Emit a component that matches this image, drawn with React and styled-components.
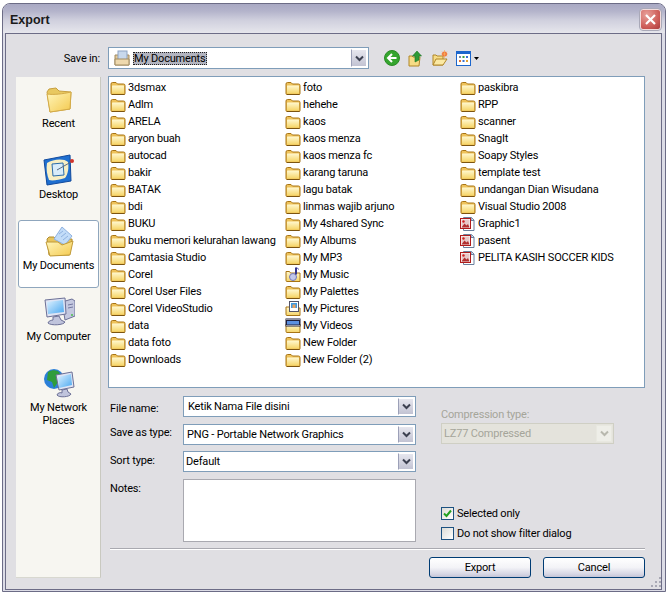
import React from 'react'
import styled, { createGlobalStyle } from 'styled-components'

const GlobalStyle = createGlobalStyle`
  html, body {
    margin: 0;
    padding: 0;
    background: #fff;
    font-family: Roboto, "Liberation Sans", Arial, sans-serif;
    font-size: 11px;
    letter-spacing: -0.18px;
    color: #000;
  }
`

const Page = styled.div`
  width: 669px;
  height: 595px;
  padding: 3px 0 0 2px;
  box-sizing: border-box;
  overflow: hidden;
`

const Window = styled.div`
  position: relative;
  width: 664px;
  height: 589px;
  box-sizing: border-box;
  display: flex;
  flex-direction: column;
  border: 1px solid #6c6c86;
  border-radius: 8px 8px 0 0;
  background: #dcdce6;
  overflow: hidden;
`

const TitleBar = styled.div`
  height: 29px;
  flex: none;
  display: flex;
  align-items: center;
  justify-content: space-between;
  padding: 2px 4px 0 7px;
  box-sizing: border-box;
  background: linear-gradient(#a9a9c3 0%, #b4b4cb 25%, #cfcfdd 55%, #e6e6ec 100%);
`

const Title = styled.div`
  font-family: "Liberation Sans", Arial, sans-serif;
  font-size: 12.5px;
  font-weight: bold;
  letter-spacing: 0;
  padding-top: 1px;
  color: #1a1a1a;
`

const CloseButton = styled.div`
  width: 21px;
  height: 21px;
  box-sizing: border-box;
  display: flex;
  align-items: center;
  justify-content: center;
  border: 1px solid #f3dcdc;
  outline: 1px solid #a9a9b8;
  border-radius: 3px;
  background: radial-gradient(circle at 30% 25%, #e8a09a, #cc5a56 65%, #a83a3c);
`

const Body = styled.div`
  flex: 1;
  display: flex;
  flex-direction: column;
  margin: 0 3px 1px 2px;
  padding: 13px 16px 0 10px;
  background: #e0dfe3;
  border: 1px solid #6c6c86;
  min-height: 0;
`

const SaveRow = styled.div`
  display: flex;
  align-items: center;
  height: 22px;
  margin-bottom: 7px;
`

const SaveLabel = styled.div`
  width: 92px;
  padding-right: 8px;
  box-sizing: border-box;
  text-align: right;
`

const Combo = styled.div`
  width: ${(p) => p.$width}px;
  height: ${(p) => p.$height || 21}px;
  box-sizing: border-box;
  display: flex;
  align-items: center;
  justify-content: space-between;
  background: ${(p) => (p.$disabled ? '#e4e3dc' : '#fff')};
  border: 1px solid ${(p) => (p.$disabled ? '#cfcfc4' : '#7f9db9')};
  color: ${(p) => (p.$disabled ? '#a5a59a' : '#000')};
  padding-left: ${(p) => p.$indent || 2}px;
`

const ComboArrow = styled.div`
  width: 16px;
  align-self: stretch;
  flex: none;
  margin: 1px;
  box-sizing: border-box;
  display: flex;
  align-items: center;
  justify-content: center;
  border: 1px solid ${(p) => (p.$disabled ? '#e8e8e0' : '#fff')};
  border-left-color: ${(p) => (p.$disabled ? '#e8e8e0' : '#9ca0b8')};
  background: ${(p) => (p.$disabled ? '#eeeee8' : 'linear-gradient(#e6e6ee, #c2c3d3)')};
`

const ComboValue = styled.span`
  display: flex;
  align-items: center;
`

const SelectedText = styled.span`
  margin-left: 3px;
  padding: 0 1px;
  line-height: 13px;
  background: #b2b4bf;
  outline: 1px dotted #222;
  outline-offset: -1px;
`

const Toolbar = styled.div`
  display: flex;
  align-items: center;
  gap: 8px;
  margin-left: 15px;
`

const Main = styled.div`
  flex: 1;
  display: flex;
  gap: 7px;
`

const Sidebar = styled.div`
  width: 85px;
  height: 501px;
  margin-top: 1px;
  flex: none;
  box-sizing: border-box;
  display: flex;
  flex-direction: column;
  gap: 3px;
  padding: 1px 1px 0 2px;
  background: #f7f6f1;
  border-right: 1px solid #c9c9c0;
  border-bottom: 1px solid #d8d8d0;
`

const Place = styled.div`
  height: 68px;
  box-sizing: border-box;
  display: flex;
  flex-direction: column;
  align-items: center;
  text-align: center;
  line-height: 13px;
  padding-top: 4px;
  gap: 2px;
  border: 1px solid ${(p) => (p.$active ? '#8fa6bd' : 'transparent')};
  border-radius: 3px;
  background: ${(p) => (p.$active ? '#fff' : 'transparent')};
  svg {
    flex: none;
  }
`

const Content = styled.div`
  flex: 1;
  display: flex;
  flex-direction: column;
  min-width: 0;
`

const FileList = styled.div`
  height: 312px;
  box-sizing: border-box;
  flex: none;
  display: grid;
  grid-template-columns: 175px 175px 1fr;
  align-content: start;
  padding: 2px 0 0 1px;
  background: #fff;
  border: 1px solid #7f9db9;
`

const Column = styled.div`
  display: flex;
  flex-direction: column;
`

const FileRow = styled.div`
  height: 17px;
  display: flex;
  align-items: center;
  gap: 2px;
  white-space: nowrap;
`

const FormArea = styled.div`
  display: flex;
  margin-top: 8px;
  height: 146px;
`

const FormGrid = styled.div`
  display: grid;
  grid-template-columns: 75px 233px;
  grid-auto-rows: min-content;
  row-gap: 6.5px;
`

const FieldLabel = styled.div`
  padding: ${(p) => p.$top || 0}px 0 0 2px;
  line-height: 13px;
`

const Notes = styled.div`
  width: 233px;
  height: 63px;
  box-sizing: border-box;
  background: #fff;
  border: 1px solid #a9a9b0;
`

const Options = styled.div`
  flex: 1;
  display: flex;
  flex-direction: column;
  padding: 12px 0 0 25px;
`

const DisabledLabel = styled.div`
  color: #a5a59a;
  line-height: 13px;
  margin-bottom: 2px;
`

const Checks = styled.div`
  margin-top: auto;
  display: flex;
  flex-direction: column;
  gap: 7px;
  padding-bottom: 2px;
`

const CheckRow = styled.div`
  display: flex;
  align-items: center;
  gap: 3px;
  line-height: 13px;
`

const CheckBox = styled.div`
  width: 13px;
  height: 13px;
  box-sizing: border-box;
  display: flex;
  align-items: center;
  justify-content: center;
  border: 1px solid #1c5180;
  background: linear-gradient(135deg, #dcdcd7, #fff);
`

const Divider = styled.div`
  height: 1px;
  margin: 6px 0 8px 2px;
  background: #a9a9b0;
  box-shadow: 0 1px 0 #fff;
`

const Buttons = styled.div`
  display: flex;
  justify-content: flex-end;
  gap: 12px;
`

const Button = styled.div`
  width: 102px;
  height: 21px;
  box-sizing: border-box;
  display: flex;
  align-items: center;
  justify-content: center;
  border: 1px solid #003c74;
  border-radius: 3px;
  background: linear-gradient(#fff 0%, #f3f3f7 50%, #d6d6e4 85%, #c4c4d6 100%);
`

const Gripper = styled.svg`
  position: absolute;
  right: 3px;
  bottom: 3px;
`

const IconDefs = () => (
  <svg width="0" height="0" style={{ position: 'absolute' }}>
    <defs>
      <linearGradient id="fold" x1="0" y1="0" x2="0" y2="1">
        <stop offset="0" stopColor="#fff8d0" />
        <stop offset="1" stopColor="#f6d568" />
      </linearGradient>
      <linearGradient id="bigfold" x1="0" y1="0" x2="1" y2="1">
        <stop offset="0" stopColor="#fff6bc" />
        <stop offset="1" stopColor="#f4c94e" />
      </linearGradient>
      <linearGradient id="screen" x1="0" y1="0" x2="1" y2="1">
        <stop offset="0" stopColor="#dff2ff" />
        <stop offset="1" stopColor="#4aa8f0" />
      </linearGradient>
    </defs>
  </svg>
)

const Folder = () => (
  <svg width="16" height="16" viewBox="0 0 16 16">
    <path d="M1 13.500V4q0-1.500 1.500-1.500h3.500L7.500 4h6q1.500 0 1.500 1.500v8q0 1-1 1H2q-1 0-1-1z" fill="#eec25a" stroke="#a87414" />
    <rect x="2" y="5.500" width="12" height="8" rx="0.500" fill="url(#fold)" />
    <path d="M2 14.500h12.500" stroke="#7c5410" />
  </svg>
)

const MusicFolder = () => (
  <svg width="16" height="16" viewBox="0 0 16 16">
    <path d="M1 13.500V4.500h3.500l1 1.500H15v8.500H2q-1 0-1-1z" fill="url(#fold)" stroke="#a87414" />
    <circle cx="8" cy="10" r="3.500" fill="#c2c8ec" stroke="#7478b8" />
    <path d="M11 0.500v7" stroke="#34348a" strokeWidth="2" />
    <path d="M11.500 0.500l2.500 2" stroke="#5a5ab0" />
  </svg>
)

const PictureFolder = () => (
  <svg width="16" height="16" viewBox="0 0 16 16">
    <path d="M1 13.500V6h3.500v1H15v7.500H2q-1 0-1-1z" fill="url(#fold)" stroke="#a87414" />
    <rect x="4.500" y="0.500" width="9" height="10" fill="#fff" stroke="#556" />
    <rect x="6" y="2" width="6" height="5" fill="#3f9be0" />
    <rect x="7.500" y="3.500" width="3" height="3.500" fill="#e8a060" />
  </svg>
)

const VideoFolder = () => (
  <svg width="16" height="16" viewBox="0 0 16 16">
    <path d="M1 13.500V6h14v8.500H2q-1 0-1-1z" fill="url(#fold)" stroke="#a87414" />
    <rect x="0.500" y="0.500" width="15" height="8" fill="#20203c" />
    <path d="M1.500 1.500h13M1.500 7.500h13" stroke="#fff" strokeDasharray="1 1" />
    <rect x="2" y="3" width="12" height="3.500" fill="#5c90e0" />
  </svg>
)

const ImageFile = () => (
  <svg width="16" height="16" viewBox="0 0 16 16">
    <path d="M3.500 1.500h8l2.500 2.500v10.500H3.500z" fill="#fff" stroke="#6a7f9c" />
    <path d="M11 1.500v3h3" fill="#cfe0f4" stroke="#6a7f9c" />
    <rect x="0.500" y="2.500" width="10" height="10" fill="#fff" stroke="#b01c1c" />
    <rect x="1.500" y="3.500" width="8" height="8" fill="#e8c8c8" />
    <path d="M1.500 11.500l3-4 2 2 1.500-1.500 1.500 3.500z" fill="#b03030" />
    <circle cx="3.500" cy="5.500" r="1.200" fill="#d02020" />
  </svg>
)

const fileIcons = { folder: Folder, music: MusicFolder, pictures: PictureFolder, videos: VideoFolder, image: ImageFile }

const columns = [
  ['3dsmax', 'Adlm', 'ARELA', 'aryon buah', 'autocad', 'bakir', 'BATAK', 'bdi', 'BUKU', 'buku memori kelurahan lawang', 'Camtasia Studio', 'Corel', 'Corel User Files', 'Corel VideoStudio', 'data', 'data foto', 'Downloads'],
  ['foto', 'hehehe', 'kaos', 'kaos menza', 'kaos menza fc', 'karang taruna', 'lagu batak', 'linmas wajib arjuno', 'My 4shared Sync', 'My Albums', 'My MP3', ['My Music', 'music'], 'My Palettes', ['My Pictures', 'pictures'], ['My Videos', 'videos'], 'New Folder', 'New Folder (2)'],
  ['paskibra', 'RPP', 'scanner', 'SnagIt', 'Soapy Styles', 'template test', 'undangan Dian Wisudana', 'Visual Studio 2008', ['Graphic1', 'image'], ['pasent', 'image'], ['PELITA KASIH SOCCER KIDS', 'image']],
]

const Chevron = ({ color = '#3c4050' }) => (
  <svg width="9" height="7" viewBox="0 0 9 7">
    <path d="M1 1.500l3.500 3.500L8 1.500" fill="none" stroke={color} strokeWidth="2" />
  </svg>
)

const RecentIcon = () => (
  <svg width="32" height="32" viewBox="0 0 32 32">
    <path d="M4 9l2-3 7-1 3 3 12 1-1 17-20 3z" fill="#e8c860" stroke="#c8a040" />
    <path d="M4 11c6 1 16 0 24-2l-1 17-20 3z" fill="url(#bigfold)" stroke="#d4ab48" />
  </svg>
)

const DesktopIcon = () => (
  <svg width="32" height="32" viewBox="0 0 32 32">
    <path d="M1 6l26-5 1 26-24 4z" fill="#1f6fd0" stroke="#124a9c" />
    <path d="M4 9c6-4 17-5 21-1 1 6 0 12-3 16-6 2-13 3-16 2-2-5-3-11-2-17z" fill="#f8efc4" />
    <path d="M9 10l11-1 1 12-11 1z" fill="#d8ecfa" stroke="#2c6ca8" />
    <path d="M14 16l14-8" stroke="#5a6a80" />
    <circle cx="29" cy="7" r="2" fill="#d0342c" />
  </svg>
)

const DocumentsIcon = () => (
  <svg width="32" height="32" viewBox="0 0 32 32">
    <path d="M4 14l2-2 5 0 2 2h16v2l-3 14H6z" fill="#e8c45c" stroke="#b08c30" />
    <path d="M11 14L19 2l10 9-7 9z" fill="#c2dcf8" stroke="#8fb2e0" />
    <path d="M16 9l4-3M18 12l5-4M20 15l5-4" stroke="#8fb2e0" />
    <path d="M3 17h12l4 3 11-4-3 14-20 1z" fill="url(#bigfold)" stroke="#c09a38" />
  </svg>
)

const ComputerIcon = () => (
  <svg width="32" height="32" viewBox="0 0 32 32">
    <path d="M19 6l10-3 3 2v15l-10 4z" fill="#c4c8e0" stroke="#6c7096" />
    <path d="M25 9l5-1M25 12l5-1" stroke="#7478a0" />
    <circle cx="29" cy="19" r="1" fill="#4cc04c" />
    <path d="M2 4l20-2 1 16-19 3z" fill="#dfe4f4" stroke="#6c7096" />
    <path d="M4 6l16-2 1 12-16 2z" fill="url(#screen)" />
    <path d="M10 21l6-1 2 4 4 2c-1 3-14 4-17 1 0-2 4-3 5-3z" fill="#c0c4dc" stroke="#6c7096" />
  </svg>
)

const NetworkIcon = () => (
  <svg width="32" height="32" viewBox="0 0 32 32">
    <circle cx="11" cy="12" r="10" fill="#2b7fd8" />
    <path d="M5 5c5-3 10-2 12 1l-3 4 1 5-4 6-2-6-5-2z" fill="#2f9c3c" />
    <path d="M13 8l16-3 2 15-15 3z" fill="#dfe4f4" stroke="#6c7096" />
    <path d="M15 10l13-3 1 11-13 3z" fill="url(#screen)" />
    <path d="M19 23l5-1 1 3 3 2c-1 3-12 4-14 1 0-2 4-3 5-2z" fill="#c0c4dc" stroke="#6c7096" />
  </svg>
)

const places = [
  { label: 'Recent', Icon: RecentIcon },
  { label: 'Desktop', Icon: DesktopIcon },
  { label: 'My Documents', Icon: DocumentsIcon, active: true },
  { label: 'My Computer', Icon: ComputerIcon },
  { label: 'My Network Places', Icon: NetworkIcon },
]

const BackIcon = () => (
  <svg width="16" height="16" viewBox="0 0 16 16">
    <circle cx="8" cy="8" r="7.500" fill="#35a52e" stroke="#2a8a26" />
    <path d="M12.500 8H5M8 4L4 8l4 4" fill="none" stroke="#fff" strokeWidth="2" />
  </svg>
)

const UpIcon = () => (
  <svg width="16" height="17" viewBox="0 0 16 17">
    <path d="M1 16V6h3l1 1h7l-1 9z" fill="#f6dc86" stroke="#b08628" />
    <path d="M7 12V6H4.500L9 1l4.500 5H11v4z" fill="#2e9a36" stroke="#1f7426" strokeWidth="0.600" />
  </svg>
)

const NewFolderIcon = () => (
  <svg width="16" height="16" viewBox="0 0 16 16">
    <path d="M1 15V5h3l1 1h6v9z" fill="#f6dc86" stroke="#b08628" />
    <path d="M1 15l3-6h11l-4 6z" fill="#fbe9a4" stroke="#b08628" />
    <circle cx="12.500" cy="4" r="2.500" fill="#f0582c" />
    <path d="M12.500 0v8M9 4h7M10 1.500l5 5M15 1.500l-5 5" stroke="#f7b25c" strokeWidth="0.700" />
  </svg>
)

const ViewsIcon = () => (
  <svg width="23" height="15" viewBox="0 0 23 15">
    <rect x="0.500" y="0.500" width="14" height="14" fill="#fff" stroke="#1c66cc" />
    <rect x="0" y="0" width="15" height="3" fill="#1c66cc" />
    <rect x="3" y="5" width="2" height="2" fill="#7a8aa0" />
    <rect x="6.500" y="5" width="2" height="2" fill="#3aa040" />
    <rect x="10" y="5" width="2" height="2" fill="#3a70d0" />
    <rect x="3" y="9" width="2" height="2" fill="#e07030" />
    <rect x="6.500" y="9" width="2" height="2" fill="#3a70d0" />
    <rect x="10" y="9" width="2" height="2" fill="#e0a030" />
    <path d="M18 6h5l-2.500 3z" fill="#000" />
  </svg>
)

const DocsSmallIcon = () => (
  <svg width="16" height="16" viewBox="0 0 16 16">
    <path d="M1 15V5h14v10z" fill="#e2c898" stroke="#a08a60" />
    <rect x="4" y="1" width="9" height="11" fill="#c8d8ec" stroke="#8ea4c4" />
    <path d="M1 15V9h14v6z" fill="#eed9ae" stroke="#a08a60" />
  </svg>
)

const App = () => (
  <Page>
    <GlobalStyle />
    <IconDefs />
    <Window>
      <TitleBar>
        <Title>Export</Title>
        <CloseButton>
          <svg width="13" height="13" viewBox="0 0 13 13">
            <path d="M2 2l9 9M11 2l-9 9" stroke="#fff" strokeWidth="2.200" />
          </svg>
        </CloseButton>
      </TitleBar>
      <Body>
        <SaveRow>
          <SaveLabel>Save in:</SaveLabel>
          <Combo $width={261} $height={22} $indent={5}>
            <ComboValue>
              <DocsSmallIcon />
              <SelectedText>My Documents</SelectedText>
            </ComboValue>
            <ComboArrow>
              <Chevron />
            </ComboArrow>
          </Combo>
          <Toolbar>
            <BackIcon />
            <UpIcon />
            <NewFolderIcon />
            <ViewsIcon />
          </Toolbar>
        </SaveRow>
        <Main>
          <Sidebar>
            {places.map(({ label, Icon, active }) => (
              <Place key={label} $active={active}>
                <Icon />
                <span>{label}</span>
              </Place>
            ))}
          </Sidebar>
          <Content>
            <FileList>
              {columns.map((items, i) => (
                <Column key={i}>
                  {items.map((item) => {
                    const [name, kind] = Array.isArray(item) ? item : [item, 'folder']
                    const Icon = fileIcons[kind]
                    return (
                      <FileRow key={name}>
                        <Icon />
                        <span>{name}</span>
                      </FileRow>
                    )
                  })}
                </Column>
              ))}
            </FileList>
            <FormArea>
              <FormGrid>
                <FieldLabel $top={6}>File name:</FieldLabel>
                <Combo $width={233} $indent={4}>
                  <span>Ketik Nama File disini</span>
                  <ComboArrow>
                    <Chevron />
                  </ComboArrow>
                </Combo>
                <FieldLabel $top={2}>Save as type:</FieldLabel>
                <Combo $width={233} $indent={3}>
                  <span>PNG - Portable Network Graphics</span>
                  <ComboArrow>
                    <Chevron />
                  </ComboArrow>
                </Combo>
                <FieldLabel $top={3}>Sort type:</FieldLabel>
                <Combo $width={233}>
                  <span>Default</span>
                  <ComboArrow>
                    <Chevron />
                  </ComboArrow>
                </Combo>
                <FieldLabel $top={3}>Notes:</FieldLabel>
                <Notes />
              </FormGrid>
              <Options>
                <DisabledLabel>Compression type:</DisabledLabel>
                <Combo $width={173} $disabled $indent={2}>
                  <span>LZ77 Compressed</span>
                  <ComboArrow $disabled>
                    <Chevron color="#b8b8ae" />
                  </ComboArrow>
                </Combo>
                <Checks>
                  <CheckRow>
                    <CheckBox>
                      <svg width="9" height="9" viewBox="0 0 9 9">
                        <path d="M1 4.500l2.500 2.500L8 1.500" fill="none" stroke="#21a121" strokeWidth="2" />
                      </svg>
                    </CheckBox>
                    Selected only
                  </CheckRow>
                  <CheckRow>
                    <CheckBox />
                    Do not show filter dialog
                  </CheckRow>
                </Checks>
              </Options>
            </FormArea>
            <Divider />
            <Buttons>
              <Button>Export</Button>
              <Button>Cancel</Button>
            </Buttons>
          </Content>
        </Main>
      </Body>
      <Gripper width="11" height="11" viewBox="0 0 11 11">
        <path d="M8 0h2v2H8zM4 4h2v2H4zM8 4h2v2H8zM0 8h2v2H0zM4 8h2v2H4zM8 8h2v2H8z" fill="#a8a8b4" />
      </Gripper>
    </Window>
  </Page>
)

export default App
